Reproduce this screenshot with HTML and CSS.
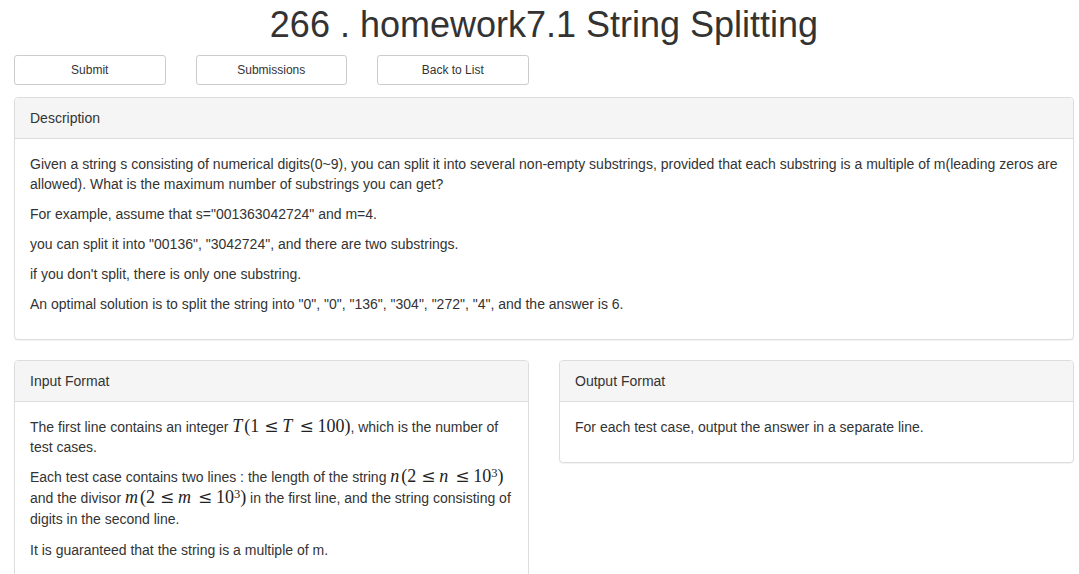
FILE: index.html
```html
<!DOCTYPE html>
<html>
<head>
<meta charset="utf-8">
<link rel="stylesheet" href="styles.css">
</head>
<body>
<div class="page">
  <h1 class="title">266 . homework7.1 String Splitting</h1>
  <div class="actions">
    <button class="btn">Submit</button>
    <button class="btn">Submissions</button>
    <button class="btn">Back to List</button>
  </div>

  <div class="panel">
    <div class="panel-heading">Description</div>
    <div class="panel-body">
      <p>Given a string s consisting of numerical digits(0~9), you can split it into several non-empty substrings, provided that each substring is a multiple of m(leading zeros are allowed). What is the maximum number of substrings you can get?</p>
      <p>For example, assume that s="001363042724" and m=4.</p>
      <p>you can split it into "00136", "3042724", and there are two substrings.</p>
      <p>if you don't split, there is only one substring.</p>
      <p>An optimal solution is to split the string into "0", "0", "136", "304", "272", "4", and the answer is 6.</p>
    </div>
  </div>

  <div class="cols">
    <div class="panel">
      <div class="panel-heading">Input Format</div>
      <div class="panel-body">
        <p>The first line contains an integer <span class="math"><i>T</i>(1<span class="rel">≤</span><i>T</i><span class="rel">≤</span>100)</span>, which is the number of test cases.</p>
        <p class="tall">Each test case contains two lines : the length of the string <span class="math"><i>n</i>(2<span class="rel">≤</span><i>n</i><span class="rel">≤</span>10<sup>3</sup>)</span> and the divisor <span class="math"><i>m</i>(2<span class="rel">≤</span><i>m</i><span class="rel">≤</span>10<sup>3</sup>)</span> in the first line, and the string consisting of digits in the second line.</p>
        <p>It is guaranteed that the string is a multiple of m.</p>
      </div>
    </div>
    <div class="panel panel-short">
      <div class="panel-heading">Output Format</div>
      <div class="panel-body">
        <p>For each test case, output the answer in a separate line.</p>
      </div>
    </div>
  </div>
</div>
</body>
</html>
```
FILE: styles.css
```css
* { box-sizing: border-box; }
html, body { margin: 0; padding: 0; background: #fff; }
body {
  font-family: "Liberation Sans", Arial, Helvetica, sans-serif;
  font-size: 14px;
  line-height: 20px;
  color: #333;
}
.page {
  width: 1060px;
  margin-left: 14px;
}
.title {
  margin: 5px 0 10px;
  font-size: 36px;
  line-height: 39.6px;
  font-weight: 500;
  text-align: center;
  color: #333;
}
.actions {
  display: flex;
  gap: 30px;
  margin-top: 0;
  margin-bottom: 12px;
}
.btn {
  width: 151.5px;
  height: 30px;
  padding: 5px 10px;
  font-family: "Liberation Sans", Arial, sans-serif;
  font-size: 12px;
  line-height: 18px;
  color: #333;
  background: #fff;
  border: 1px solid #ccc;
  border-radius: 3px;
}
.panel {
  border: 1px solid #ddd;
  border-radius: 4px;
  background: #fff;
  box-shadow: 0 1px 1px rgba(0,0,0,.05);
  margin-bottom: 20px;
}
.panel-heading {
  background: #f5f5f5;
  border-bottom: 1px solid #ddd;
  border-radius: 3px 3px 0 0;
  padding: 10px 15px;
  color: #333;
}
.panel-body {
  padding: 15px;
}
.panel-body p {
  margin: 0 0 10px;
}
.panel-body p.tall {
  line-height: 21px;
}
.cols {
  display: grid;
  grid-template-columns: 1fr 1fr;
  gap: 30px;
  align-items: start;
}
.math {
  font-family: "Liberation Serif", "Times New Roman", serif;
  font-size: 18px;
  line-height: 0;
  white-space: nowrap;
  color: #222;
}
.math i {
  font-style: italic;
  padding-right: 2px;
}
.math .rel {
  display: inline-block;
  width: 13px;
  margin: 0 5px;
  text-align: center;
  font-family: "DejaVu Serif", serif;
  font-size: 17px;
  font-weight: normal;
}
.math sup {
  font-size: 12.5px;
  line-height: 0;
  vertical-align: 0.42em;
}
```
